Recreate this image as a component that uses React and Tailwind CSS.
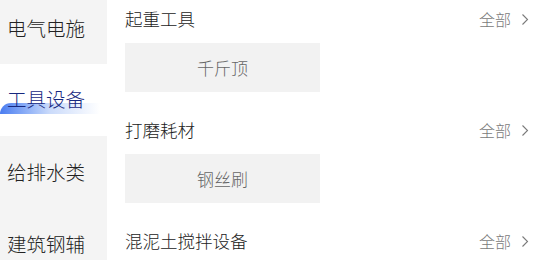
const sideItems = ['电气电施', '工具设备', '给排水类', '建筑钢辅'];

const sections = [
  { title: '起重工具', items: ['千斤顶'] },
  { title: '打磨耗材', items: ['钢丝刷'] },
  { title: '混泥土搅拌设备', items: [] },
];

function Chevron() {
  return (
    <svg width="8" height="13" viewBox="0 0 8 13" fill="none" className="ml-[10px]">
      <path d="M1.5 1.5 L6.5 6.5 L1.5 11.5" stroke="#7a7a7a" strokeWidth="1.1" />
    </svg>
  );
}

export default function App() {
  const active = 1;

  return (
    <div
      className="w-[533px] h-[260px] overflow-hidden flex bg-white font-light"
      style={{ fontFamily: '"Noto Sans CJK SC", "Noto Sans", sans-serif' }}
    >
      {/* Category sidebar */}
      <div className="w-[107px] shrink-0 bg-[#f4f4f4] overflow-hidden">
        <div className="-mt-[8px]">
          {sideItems.map((name, i) => (
            <div
              key={name}
              className={`h-[72px] flex items-center pl-[7px] ${i === active ? 'bg-white' : ''}`}
            >
              {i === active ? (
                <div className="relative">
                  <div className="absolute left-[-7px] top-[15px] w-[100px] h-[11px] rounded-tl-[12px] bg-gradient-to-r from-[#4a7cf0] via-[#b4cbf8]/70 to-transparent" />
                  <span className="relative text-[19.5px] leading-none text-[#17287f]">{name}</span>
                </div>
              ) : (
                <span className="text-[19.5px] leading-none text-[#222]">{name}</span>
              )}
            </div>
          ))}
        </div>
      </div>

      {/* Content */}
      <div className="flex-1 pl-[18px] pr-[4px]">
        {sections.map((sec) => (
          <div key={sec.title} className="h-[111px]">
            <div className="h-[38px] flex items-center justify-between">
              <span className="text-[17.5px] leading-none text-[#222]">{sec.title}</span>
              <div className="flex items-center text-[16px] leading-none text-[#7a7a7a]">
                全部
                <Chevron />
              </div>
            </div>
            <div className="mt-[5px] flex gap-[10px]">
              {sec.items.map((it) => (
                <div
                  key={it}
                  className="w-[195px] h-[49px] bg-[#f2f2f2] flex items-center justify-center text-[17px] text-[#666]"
                >
                  {it}
                </div>
              ))}
            </div>
          </div>
        ))}
      </div>
    </div>
  );
}
